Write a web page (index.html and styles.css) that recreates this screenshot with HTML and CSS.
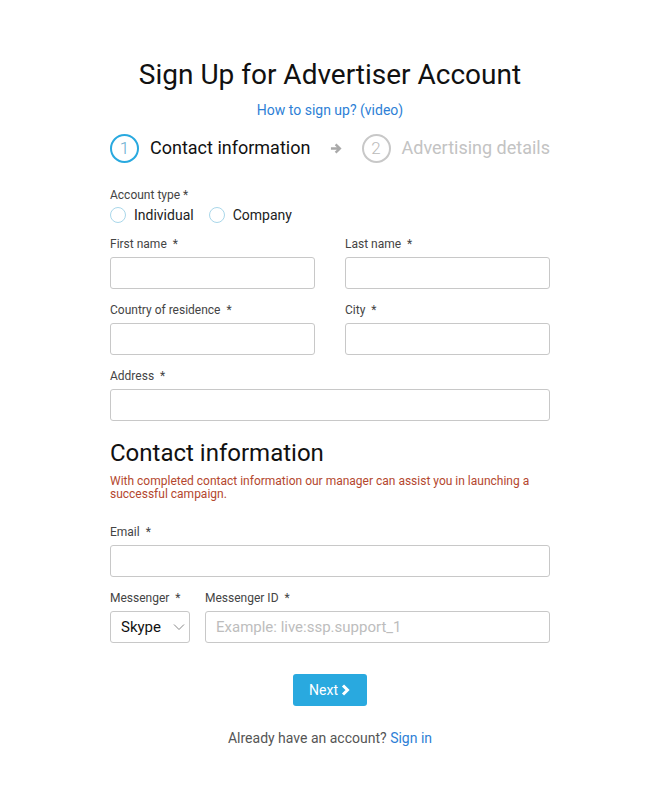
FILE: index.html
```html
<!DOCTYPE html>
<html lang="en">
    <head>
        <meta charset="UTF-8">
        <meta name="viewport" content="width=device-width, initial-scale=1.0">
        <title>Sign Up for Advertiser Account</title>
        <link rel="stylesheet" href="styles.css">
    </head>
    <body>
        <div class="signup">
            <h1 class="title">Sign Up for Advertiser Account</h1>
            <div class="howto"><a href="#">How to sign up? (video)</a></div>

            <div class="steps">
                <div class="step active">
                    <span class="step-num">1</span>
                    <span class="step-name">Contact information</span>
                </div>
                <svg class="step-arrow" width="13" height="13" viewBox="0 0 13 13">
                    <path d="M1 6.5h9.5M6 2l4.5 4.5L6 11" fill="none" stroke="#a9a9a9" stroke-width="2.6"/>
                </svg>
                <div class="step">
                    <span class="step-num">2</span>
                    <span class="step-name">Advertising details</span>
                </div>
            </div>

            <div class="account-type">
                <label class="field-label">Account type *</label>
                <div class="radios">
                    <label class="radio"><input type="radio" name="type"><span class="radio-mark"></span>Individual</label>
                    <label class="radio"><input type="radio" name="type"><span class="radio-mark"></span>Company</label>
                </div>
            </div>

            <div class="row">
                <div class="form-group">
                    <label class="field-label">First name &nbsp;*</label>
                    <input type="text" class="text-input">
                </div>
                <div class="form-group">
                    <label class="field-label">Last name &nbsp;*</label>
                    <input type="text" class="text-input">
                </div>
            </div>
            <div class="row">
                <div class="form-group">
                    <label class="field-label">Country of residence &nbsp;*</label>
                    <input type="text" class="text-input">
                </div>
                <div class="form-group">
                    <label class="field-label">City &nbsp;*</label>
                    <input type="text" class="text-input">
                </div>
            </div>
            <div class="form-group">
                <label class="field-label">Address &nbsp;*</label>
                <input type="text" class="text-input">
            </div>

            <h2 class="section-title">Contact information</h2>
            <p class="section-note">With completed contact information our manager can assist you in launching a successful campaign.</p>

            <div class="form-group email-group">
                <label class="field-label">Email &nbsp;*</label>
                <input type="email" class="text-input">
            </div>
            <div class="row messenger-row">
                <div class="form-group messenger">
                    <label class="field-label">Messenger &nbsp;*</label>
                    <div class="select-wrap">
                        <select class="select-input">
                            <option>Skype</option>
                            <option>Telegram</option>
                        </select>
                        <svg class="select-caret" width="12" height="8" viewBox="0 0 12 8">
                            <path d="M1 1.5l5 5 5-5" fill="none" stroke="#888" stroke-width="1"/>
                        </svg>
                    </div>
                </div>
                <div class="form-group messenger-id">
                    <label class="field-label">Messenger ID &nbsp;*</label>
                    <input type="text" class="text-input" placeholder="Example: live:ssp.support_1">
                </div>
            </div>

            <div class="actions">
                <button type="button" class="next-btn">Next
                    <svg width="10" height="12" viewBox="0 0 10 12">
                        <path d="M2 1.5l4.5 4.5L2 10.5" fill="none" stroke="#fff" stroke-width="3"/>
                    </svg>
                </button>
            </div>

            <p class="signin">Already have an account? <a href="#">Sign in</a></p>
        </div>
    </body>
</html>
```

FILE: styles.css
```css
:root {
    --blue: #29a9df;
    --link: #2e7fd6;
    --border: #c8c8c8;
    --label: #444;
}

body {
    margin: 0;
    padding-left: 10px;
    background: #fff;
    font-family: Roboto, 'Liberation Sans', sans-serif;
    color: #222;
}

a {
    color: var(--link);
    text-decoration: none;
}

.signup {
    width: 440px;
    margin: 0 auto;
    padding-top: 58px;
}

.title {
    margin: 0;
    font-size: 28px;
    line-height: 34px;
    font-weight: 400;
    text-align: center;
    color: #111;
}

.howto {
    margin-top: 9px;
    font-size: 14px;
    line-height: 18px;
    text-align: center;
}

.steps {
    display: flex;
    align-items: center;
    margin-top: 14px;
    height: 30px;
    white-space: nowrap;
}

.step {
    display: flex;
    align-items: center;
    gap: 11px;
    color: #c3c3c3;
}

.step-num {
    width: 25px;
    height: 25px;
    border: 2px solid #c8c8c8;
    border-radius: 50%;
    display: flex;
    align-items: center;
    justify-content: center;
    font-size: 17px;
    font-weight: 300;
    color: #bbb;
}

.step-name {
    font-size: 18px;
    line-height: 22px;
}

.step.active .step-num {
    border-color: var(--blue);
    color: #6aaed0;
}

.step.active .step-name {
    color: #111;
}

.step-arrow {
    margin: 0 19px 0 20px;
}

.field-label {
    display: block;
    font-size: 12px;
    line-height: 16px;
    color: var(--label);
}

.account-type {
    margin-top: 24px;
}

.radios {
    display: flex;
    gap: 15px;
    margin-top: 3px;
    height: 18px;
    align-items: center;
}

.radio {
    display: flex;
    align-items: center;
    gap: 8px;
    font-size: 14px;
    color: #222;
}

.radio input {
    display: none;
}

.radio-mark {
    width: 14px;
    height: 14px;
    border: 1px solid #a9d7ea;
    border-radius: 50%;
}

.row {
    display: flex;
    gap: 30px;
}

.row .form-group {
    flex: 1;
}

.account-type + .row {
    margin-top: 12px;
}

.form-group {
    margin-bottom: 13px;
}

.form-group .field-label {
    margin-bottom: 5px;
}

.text-input,
.select-input {
    display: block;
    box-sizing: border-box;
    width: 100%;
    height: 32px;
    padding: 0 10px;
    border: 1px solid var(--border);
    border-radius: 3px;
    font-family: inherit;
    font-size: 15px;
    color: #222;
    background: #fff;
}

.text-input::placeholder {
    color: #bdbdbd;
}

.section-title {
    margin: 17px 0 0;
    font-size: 24px;
    line-height: 30px;
    font-weight: 400;
    color: #111;
}

.section-note {
    margin: 7px 0 0;
    font-size: 12px;
    line-height: 13px;
    color: #b4472e;
}

.email-group {
    margin-top: 23px;
}

.messenger-row {
    gap: 15px;
}

.row .messenger {
    flex: 0 0 80px;
}

.select-wrap {
    position: relative;
}

.select-input {
    appearance: none;
    padding-left: 10px;
    font-size: 15px;
    color: #111;
}

.select-caret {
    position: absolute;
    right: 5px;
    top: 12px;
    pointer-events: none;
}

.actions {
    display: flex;
    justify-content: center;
    margin-top: 18px;
}

.next-btn {
    display: flex;
    align-items: center;
    gap: 3px;
    height: 32px;
    padding: 0 16px;
    border: none;
    border-radius: 3px;
    background: var(--blue);
    color: #fff;
    font-family: inherit;
    font-size: 14px;
    cursor: pointer;
}

.signin {
    margin: 23px 0 0;
    font-size: 14px;
    line-height: 18px;
    text-align: center;
    color: #555;
}
```
